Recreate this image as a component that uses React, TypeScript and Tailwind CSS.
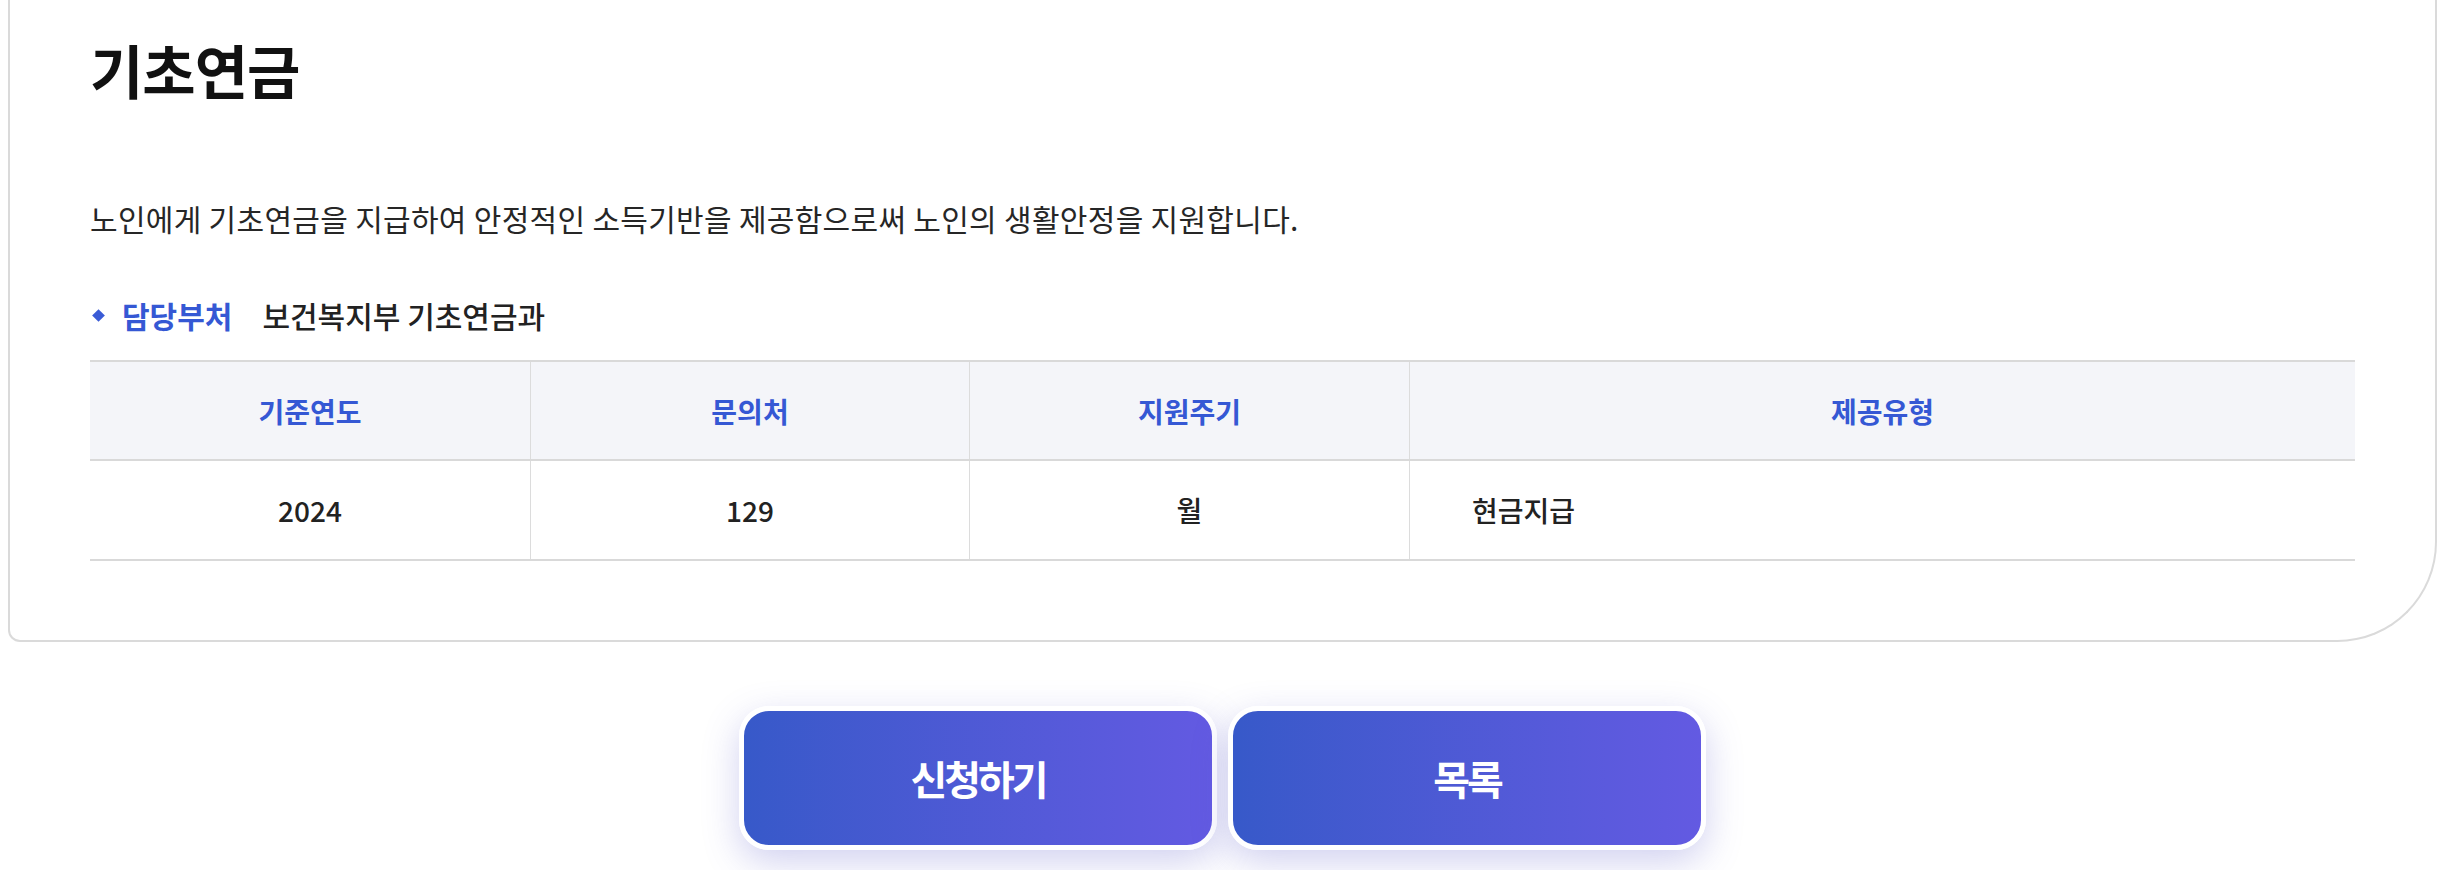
const FONT = '"Noto Sans CJK KR", "Noto Sans", sans-serif';

const COLUMNS = [
  { label: '기준연도', value: '2024', align: 'center' },
  { label: '문의처', value: '129', align: 'center' },
  { label: '지원주기', value: '월', align: 'center' },
  { label: '제공유형', value: '현금지급', align: 'left' },
];

function InfoTable() {
  return (
    <div className="mt-[25px] border-y-2 border-[#d9d9d9]">
      {/* header */}
      <div className="grid grid-cols-[440px_439px_440px_1fr] bg-[#f4f5f9] border-b-2 border-[#d9d9d9]">
        {COLUMNS.map((c, i) => (
          <div
            key={c.label}
            className={
              'flex h-[97px] items-center justify-center text-[28px] font-semibold text-[#3558d4] ' +
              (i > 0 ? 'border-l border-[#dcdcdc]' : '')
            }
          >
            {c.label}
          </div>
        ))}
      </div>
      {/* body */}
      <div className="grid grid-cols-[440px_439px_440px_1fr]">
        {COLUMNS.map((c, i) => (
          <div
            key={c.label}
            className={
              'flex h-[98px] items-center text-[28px] font-medium text-[#222] ' +
              (c.align === 'left' ? 'justify-start pl-[62px] ' : 'justify-center ') +
              (i > 0 ? 'border-l border-[#dcdcdc]' : '')
            }
          >
            {c.value}
          </div>
        ))}
      </div>
    </div>
  );
}

function ActionButton({ label }: { label: string }) {
  return (
    <button
      type="button"
      className="flex h-[144px] w-[478px] items-center justify-center rounded-[30px] border-[5px] border-white bg-gradient-to-r from-[#3759c9] to-[#635ae2] text-[40px] font-bold tracking-[-3px] text-white shadow-[0_12px_36px_rgba(90,90,200,0.28)]"
    >
      {label}
    </button>
  );
}

export default function App() {
  return (
    <div className="min-h-screen bg-white pl-[8px] pr-[15px]" style={{ fontFamily: FONT }}>
      {/* Card */}
      <section className="rounded-bl-[12px] rounded-br-[100px] border-x-2 border-b-2 border-[#dadada] bg-white px-[80px] pb-[79px] pt-[36px]">
        <h1 className="text-[58px] font-bold leading-[66px] tracking-[-1px] text-[#111]">기초연금</h1>

        <p className="mt-[96px] text-[30px] leading-[40px] tracking-[0.3px] text-[#262626]">
          노인에게 기초연금을 지급하여 안정적인 소득기반을 제공함으로써 노인의 생활안정을 지원합니다.
        </p>

        <div className="mt-[57px] flex items-center text-[30px] leading-[40px]">
          <span className="ml-[4px] mr-[19px] h-[9px] w-[9px] rotate-45 bg-[#3a5bd6]" />
          <span className="font-bold text-[#3558d4]">담당부처</span>
          <span className="ml-[30px] font-medium text-[#222]">보건복지부 기초연금과</span>
        </div>

        <InfoTable />
      </section>

      {/* Actions */}
      <div className="mt-[64px] flex justify-center gap-[11px]">
        <ActionButton label="신청하기" />
        <ActionButton label="목록" />
      </div>
    </div>
  );
}
